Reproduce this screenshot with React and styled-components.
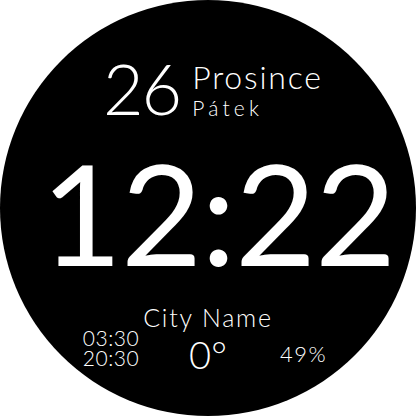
import React from "react";
import styled, { createGlobalStyle } from "styled-components";

const Global = createGlobalStyle`
  html, body {
    margin: 0;
    padding: 0;
    background: #fff;
  }
  body {
    font-family: "Lato", "Inter", "Liberation Sans", sans-serif;
  }
`;

const Face = styled.div`
  width: 416px;
  height: 416px;
  border-radius: 50%;
  background: #000;
  color: #fff;
  display: flex;
  flex-direction: column;
  align-items: center;
  padding-top: 53px;
  box-sizing: border-box;
  overflow: hidden;
`;

const DateRow = styled.div`
  align-self: stretch;
  display: flex;
  align-items: flex-start;
  gap: 12px;
  padding-left: 103px;
`;

const Day = styled.div`
  font-size: 70px;
  line-height: 70px;
  font-weight: 300;
  letter-spacing: -2px;
`;

const DateText = styled.div`
  display: flex;
  flex-direction: column;
  gap: 4px;
  margin-top: 8px;
`;

const Month = styled.div`
  font-size: 32px;
  line-height: 32px;
  font-weight: 300;
  letter-spacing: 1.8px;
`;

const Weekday = styled.div`
  font-size: 21px;
  line-height: 21px;
  font-weight: 300;
  letter-spacing: 4.2px;
`;

const Clock = styled.div`
  margin-top: 19px;
  margin-left: 20px;
  font-size: 140px;
  line-height: 140px;
  font-weight: 400;
  letter-spacing: -1.2px;
`;

const City = styled.div`
  margin-top: 24px;
  font-size: 25px;
  line-height: 22px;
  font-weight: 300;
  letter-spacing: 1.8px;
`;

const InfoRow = styled.div`
  width: 100%;
  display: grid;
  grid-template-columns: 1fr auto 1fr;
  align-items: start;
`;

const Times = styled.div`
  justify-self: end;
  margin-right: 50px;
  font-size: 21px;
  line-height: 20px;
  font-weight: 300;
  letter-spacing: 0.5px;
  white-space: pre-line;
`;

const Temp = styled.div`
  margin-top: 7px;
  font-size: 38px;
  line-height: 38px;
  font-weight: 300;
`;

const Battery = styled.div`
  justify-self: start;
  margin-left: 53px;
  margin-top: 16px;
  font-size: 22px;
  line-height: 20px;
  font-weight: 300;
  letter-spacing: 1.6px;
`;

export default function App() {
  return (
    <>
      <Global />
      <Face>
        <DateRow>
          <Day>26</Day>
          <DateText>
            <Month>Prosince</Month>
            <Weekday>Pátek</Weekday>
          </DateText>
        </DateRow>
        <Clock>12:22</Clock>
        <City>City Name</City>
        <InfoRow>
          <Times>{"03:30\n20:30"}</Times>
          <Temp>0°</Temp>
          <Battery>49%</Battery>
        </InfoRow>
      </Face>
    </>
  );
}
